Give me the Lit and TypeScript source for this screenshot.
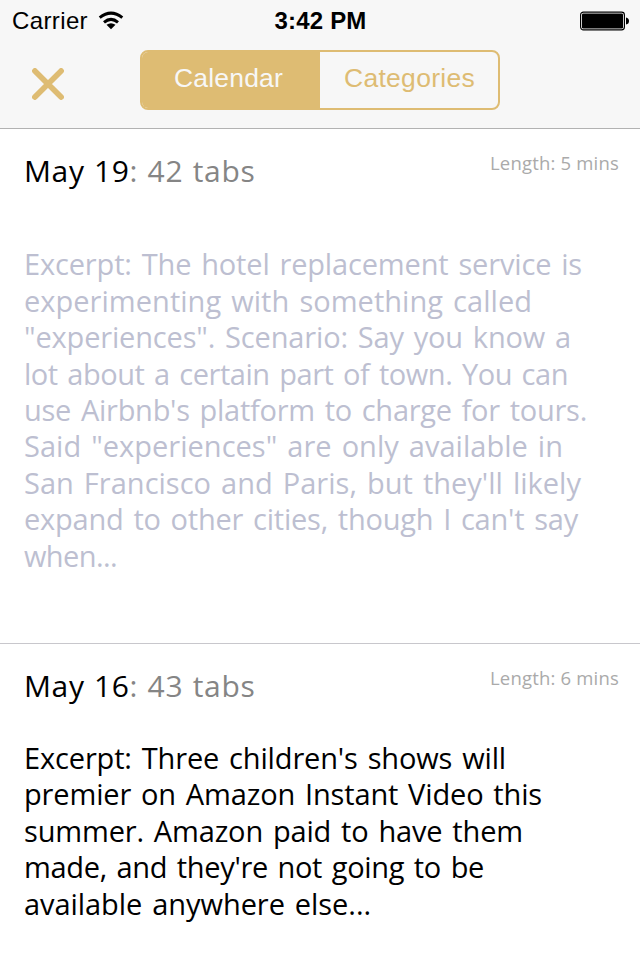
import { LitElement, html, css } from "lit";
import { customElement, property } from "lit/decorators.js";

/** One line of text, tracked so that it spans the given measure. */
@customElement("text-line")
class TextLine extends LitElement {
  @property({ type: Number }) measure = 0;
  static styles = css`
    :host { display: block; white-space: pre; }
    .run { display: inline-block; }
  `;
  render() {
    return html`<span class="run"><slot></slot></span>`;
  }
  firstUpdated() {
    const run = this.renderRoot.querySelector(".run") as HTMLElement;
    const count = (this.textContent ?? "").length;
    const natural = run.getBoundingClientRect().width;
    if (count && this.measure) run.style.letterSpacing = `${(this.measure - natural) / count}px`;
  }
}

type Line = [string, number];
interface Entry { date: string; tabs: string; length: string; read: boolean; lines: Line[]; }

const entries: Entry[] = [
  {
    date: "May 19", tabs: "42 tabs", length: "Length: 5 mins", read: true,
    lines: [
      ["Excerpt: The hotel replacement service is", 558],
      ["experimenting with something called", 508],
      ["\"experiences\". Scenario: Say you know a", 547],
      ["lot about a certain part of town. You can", 544],
      ["use Airbnb's platform to charge for tours.", 563],
      ["Said \"experiences\" are only available in", 539],
      ["San Francisco and Paris, but they'll likely", 557],
      ["expand to other cities, though I can't say", 554],
      ["when...", 93],
    ],
  },
  {
    date: "May 16", tabs: "43 tabs", length: "Length: 6 mins", read: false,
    lines: [
      ["Excerpt: Three children's shows will", 482],
      ["premier on Amazon Instant Video this", 518],
      ["summer. Amazon paid to have them", 499],
      ["made, and they're not going to be", 460],
      ["available anywhere else...", 347],
    ],
  },
];

@customElement("app-root")
class AppRoot extends LitElement {
  static styles = css`
    :host {
      display: block; width: 640px; height: 960px; overflow: hidden;
      background: #fff; color: #000; font-family: "Open Sans", sans-serif;
    }
    * { box-sizing: border-box; }
    svg { display: block; }
    header {
      height: 129px; background: #f7f7f7; border-bottom: 1px solid #b2b2b2;
      font-family: "Liberation Sans", Arial, sans-serif;
    }
    .status {
      height: 40px; display: grid; grid-template-columns: 1fr auto 1fr;
      align-items: center; padding: 2px 11px 0 12px; font-size: 24px; line-height: 38px;
    }
    .carrier { display: flex; align-items: center; gap: 10px; }
    .time { font-weight: 700; }
    .battery { justify-self: end; }
    .nav { display: grid; grid-template-columns: 108px 360px; padding: 10px 0 0 32px; }
    .close { padding-top: 18px; }
    .segments {
      display: grid; grid-template-columns: 178px 1fr; height: 60px;
      border: 2px solid #debc73; border-radius: 8px; overflow: hidden;
      font-size: 26.5px; line-height: 53px; color: #debc73;
    }
    .segment { padding-left: 24px; }
    .segment.on { background: #debc73; color: #f7f7f7; padding-left: 32px; }
    .entry { padding: 0 21px 0 24px; }
    .entry.read { height: 515px; border-bottom: 1px solid #c8c7cc; }
    .heading { display: flex; justify-content: space-between; height: 85px; padding-top: 22px; }
    .title { display: flex; font-size: 30px; line-height: 40px; word-spacing: 1px; }
    .tabs { color: #858585; }
    .length { font-size: 18.5px; line-height: 24px; color: #aaa; }
    .excerpt { padding-top: 11px; font-size: 29px; line-height: 36.4px; word-spacing: 2.5px; }
    .read .excerpt { padding-top: 32.4px; color: #bdbfd1; }
  `;
  render() {
    return html`
      <header>
        <div class="status">
          <div class="carrier">
            <text-line measure="76">Carrier</text-line>
            <svg width="26" height="20" viewBox="0 0 26 20" fill="none" stroke="#000" stroke-width="3">
              <path d="M1.7 6.6Q13 -2.4 24.3 6.6" /><path d="M6 11.3Q13 5.4 20 11.3" />
              <path d="M13 18.3L8.5 13.8Q13 10.5 17.5 13.8Z" fill="#000" stroke="none" />
            </svg>
          </div>
          <div class="time"><text-line measure="92">3:42 PM</text-line></div>
          <svg class="battery" width="49" height="20" viewBox="0 0 49 20">
            <rect x="0.6" y="1.1" width="43.8" height="17.8" rx="2.8" fill="#fff" stroke="#000" stroke-width="1.2" />
            <rect x="2" y="2.5" width="41" height="15" rx="1.3" />
            <path d="M46 6.5Q49 7 49 10Q49 13 46 13.5Z" />
          </svg>
        </div>
        <div class="nav">
          <div class="close">
            <svg width="32" height="32" viewBox="0 0 32 32" stroke="#debc73" stroke-width="5.6" stroke-linecap="round">
              <path d="M2.9 2.9L29.1 29.1M29.1 2.9L2.9 29.1" />
            </svg>
          </div>
          <div class="segments">
            <div class="segment on"><text-line measure="109">Calendar</text-line></div>
            <div class="segment"><text-line measure="131">Categories</text-line></div>
          </div>
        </div>
      </header>
      ${entries.map((e) => html`
        <section class="entry ${e.read ? "read" : ""}">
          <div class="heading">
            <div class="title">
              <text-line measure="105.5">${e.date}</text-line>
              <text-line class="tabs" measure="126">${": " + e.tabs}</text-line>
            </div>
            <text-line class="length" measure="129">${e.length}</text-line>
          </div>
          <div class="excerpt">
            ${e.lines.map(([t, w]) => html`<text-line measure=${w}>${t}</text-line>`)}
          </div>
        </section>`)}
    `;
  }
}
